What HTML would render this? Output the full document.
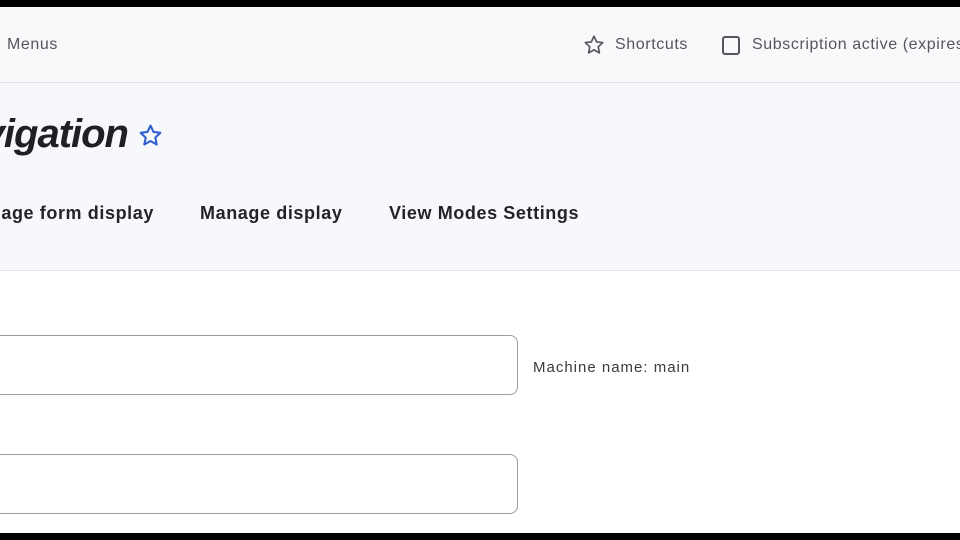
<!DOCTYPE html>
<html><head><style>
body{margin:0;width:960px;height:540px;overflow:hidden;background:#000;font-family:"Liberation Sans",sans-serif;position:relative}
.pg{position:absolute;left:0;top:7px;width:960px;height:526px;background:#fff;overflow:hidden}
.hdr{position:absolute;left:0;top:0;width:960px;height:75px;background:#f8f9fb;border-bottom:1px solid #e3e4e8}
.band{position:absolute;left:0;top:76px;width:960px;height:187px;background:#f7f8fc;border-bottom:1px solid #e3e4e8}
.t{position:absolute;white-space:nowrap}
.r{position:absolute;white-space:nowrap;text-align:right}
.inp{position:absolute;left:-20px;width:536px;height:58px;border:1px solid #9c9c9f;border-radius:8px;background:#fff}
.h{font-size:16px;color:#55565b;top:29px;letter-spacing:0.6px}
.tab{font-size:18px;font-weight:bold;color:#232429;top:196px;letter-spacing:0.6px}
</style></head><body>
<div class="pg">
<div class="hdr"></div>
<div class="band"></div>
<div class="t h" style="left:7px">Menus</div>
<svg style="position:absolute;left:583px;top:27px" width="22" height="22" viewBox="0 0 24 24"><path d="M12 2.5l2.9 6.1 6.6.8-4.9 4.6 1.3 6.6L12 17.3l-5.9 3.3 1.3-6.6-4.9-4.6 6.6-.8z" fill="none" stroke="#55565b" stroke-width="1.8" stroke-linejoin="round"/></svg>
<div class="t h" style="left:615px">Shortcuts</div>
<div style="position:absolute;left:722px;top:29px;width:14px;height:15px;border:2px solid #55565b;border-radius:3px"></div>
<div class="t h" style="left:752px">Subscription active (expires</div>
<div class="r" style="right:832px;top:105px;font-size:40px;font-weight:bold;font-style:italic;color:#1f1f24;letter-spacing:-1px">Navigation</div>
<svg style="position:absolute;left:138px;top:116px" width="25" height="25" viewBox="0 0 24 24"><path d="M12 2.5l2.9 6.1 6.6.8-4.9 4.6 1.3 6.6L12 17.3l-5.9 3.3 1.3-6.6-4.9-4.6 6.6-.8z" fill="none" stroke="#2f5fd0" stroke-width="2" stroke-linejoin="round"/></svg>
<div class="r tab" style="right:806px">Manage form display</div>
<div class="t tab" style="left:200px">Manage display</div>
<div class="t tab" style="left:389px">View Modes Settings</div>
<div class="inp" style="top:328px"></div>
<div class="t" style="left:533px;top:352px;font-size:15px;color:#3a3b40;letter-spacing:1px">Machine name: main</div>
<div class="inp" style="top:447px"></div>
</div>
</body></html>
